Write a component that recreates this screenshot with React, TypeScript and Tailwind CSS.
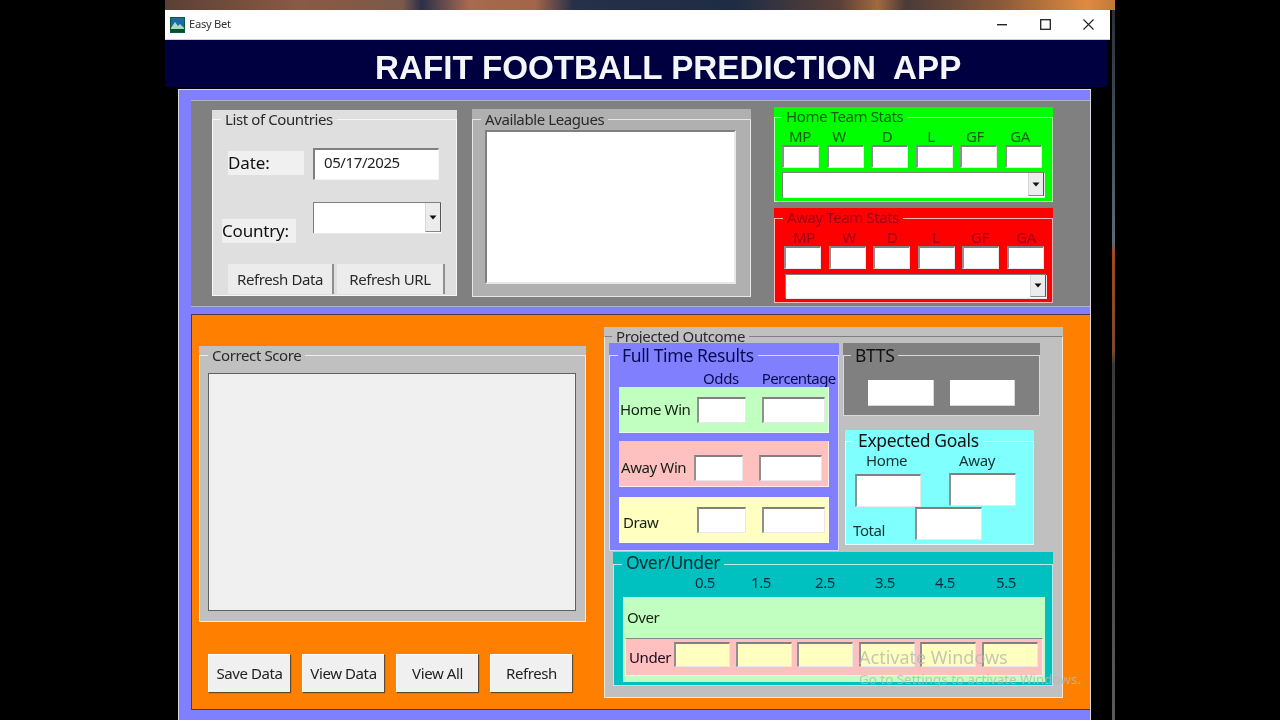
import React from "react";

const font = { fontFamily: '"Noto Sans", Tahoma, sans-serif' };
const small = "text-[15px] tracking-[-0.4px]";

function Caret() {
  return (
    <svg width="8" height="5" viewBox="0 0 8 5" className="block">
      <path d="M0.5 0.5H7.5L4 4.5Z" fill="#111" />
    </svg>
  );
}

function Combo({ cls, btn }: { cls: string; btn: string }) {
  return (
    <div className={`flex justify-end bg-white border-t border-l border-[#808080] shadow-[1px_1px_0_#e8e8e8] ${cls}`}>
      <div className={`flex items-center justify-center bg-[#ececec] border-l border-[#d8d8d8] border-r border-b border-r-[#555] border-b-[#888] ${btn}`}>
        <Caret />
      </div>
    </div>
  );
}

function Field({ cls }: { cls: string }) {
  return <div className={`border-t-2 border-l-2 border-t-[#808080] border-l-[#909090] border-r border-b border-r-[#e8e8e8] border-b-[#e8e8e8] ${cls}`} />;
}

function Group({
  title,
  cls,
  bg,
  titleCls,
  lineTop,
  left,
  frame = "border-white/70",
  children,
}: {
  title: string;
  cls: string;
  bg: string;
  titleCls: string;
  lineTop: string;
  left: string;
  frame?: string;
  children?: React.ReactNode;
}) {
  return (
    <div className={`relative shrink-0 ${bg} ${cls}`}>
      <div className={`absolute inset-x-0 bottom-0 border ${frame} ${lineTop}`} />
      <div className={`relative w-fit whitespace-nowrap px-[4px] ${bg} ${left} ${titleCls}`}>{title}</div>
      {children}
    </div>
  );
}

function FormButton({ label }: { label: string }) {
  return (
    <div className={`flex h-[38px] w-[82px] items-center justify-center bg-[#f0f0f0] border-t border-l border-t-white border-l-white shadow-[1px_1px_1px_#5c4a30] text-[#222] ${small}`}>
      {label}
    </div>
  );
}

function Stats({ cols, gaps }: { cols: [string, string][]; gaps: string }) {
  return (
    <>
      <div className="flex">
        {cols.map(([t, c]) => (
          <div key={t} className={`text-center ${c}`}>
            {t}
          </div>
        ))}
      </div>
      <div className={`flex ${gaps}`}>
        {cols.map(([t]) => (
          <Field key={t} cls="h-[23px] w-[37px] bg-white" />
        ))}
      </div>
    </>
  );
}

function OddsRow({
  label,
  bg,
  mt,
  pl,
  pt,
  labelCls,
}: {
  label: string;
  bg: string;
  mt: string;
  pl: string;
  pt: string;
  labelCls: string;
}) {
  return (
    <div className={`relative z-10 ml-[10px] flex h-[46px] w-[210px] items-center border-b border-r border-white/70 ${bg} ${mt} ${pl} ${pt}`}>
      <div className={`whitespace-nowrap text-[#152015] ${small} ${labelCls}`}>{label}</div>
      <Field cls="h-[26px] w-[49px] bg-white" />
      <Field cls="ml-[16px] h-[26px] w-[63px] bg-white" />
    </div>
  );
}

export default function App() {
  return (
    <div className="h-[720px] w-[1280px] overflow-hidden bg-black blur-[0.4px]" style={font}>
      <div className="relative ml-[165px] flex h-[720px] w-[950px] flex-col">
        <div className="h-[10px] w-full shrink-0 bg-[linear-gradient(90deg,#5a4034_0%,#8a5a44_14%,#7a5a4a_25%,#2a3048_27%,#a86a50_32%,#a0654a_39%,#263048_43%,#1e2c44_60%,#5a4038_71%,#a06a40_75%,#4a3a38_78%,#8a5a3a_88%,#e08a40_97%,#c07a3a_100%)]" />
        <div className="flex min-h-0 flex-1">
          <div className="flex w-[947px] shrink-0 flex-col">
            <div className="flex h-[30px] w-[945px] shrink-0 items-center bg-white border-b border-[#d0d0d0] pl-[5px] pr-[16px] text-[11.2px] tracking-[-0.3px] text-[#333]">
              <svg width="15" height="16" viewBox="0 0 15 16" className="mr-[4px]">
                <rect width="15" height="16" fill="#0b5a3c" />
                <rect x="1" y="1" width="13" height="10" fill="#1c68a8" />
                <path d="M1 11L5 5L8 9L10 7L14 11V13H1Z" fill="#a8dcc0" />
                <rect x="1" y="12" width="13" height="3" fill="#0b4d2e" />
              </svg>
              <span>Easy Bet</span>
              <div className="ml-auto flex items-center">
                <svg width="10" height="2" viewBox="0 0 10 2">
                  <rect width="10" height="1.4" fill="#222" />
                </svg>
                <svg width="11" height="11" viewBox="0 0 11 11" className="ml-[33px]">
                  <rect x="0.7" y="0.7" width="9.6" height="9.6" fill="none" stroke="#222" strokeWidth="1.3" />
                </svg>
                <svg width="11" height="11" viewBox="0 0 11 11" className="ml-[32px]">
                  <path d="M0.5 0.5L10.5 10.5M10.5 0.5L0.5 10.5" stroke="#222" strokeWidth="1.1" />
                </svg>
              </div>
            </div>
            <div
              className="h-[47px] w-[942px] shrink-0 whitespace-pre bg-[#000040] pl-[210px] pt-[7px] text-[33.2px] font-bold leading-[42px] text-[#f4f6fa]"
              style={{ fontFamily: '"Liberation Sans", Arial, sans-serif' }}
            >
              RAFIT FOOTBALL PREDICTION  APP
            </div>

            <div className="ml-[13px] mt-[2px] h-[631px] w-[913px] shrink-0 border-t border-l border-r border-[#d8d8e8] bg-[#8080ff] pl-[12px] pt-[10px]">
              {/* top panel */}
              <div className="flex h-[207px] w-[899px] border-t border-b border-[#b0b0d0] bg-[#808080]">
                <Group
                  title="List of Countries"
                  cls="ml-[21px] mt-[9px] h-[186px] w-[245px]"
                  bg="bg-[#dfdfdf]"
                  titleCls={`${small} h-[20px] leading-[18px] text-[#2a2a2a]`}
                  lineTop="top-[9px]"
                  left="ml-[9px]"
                >
                  <div className="relative flex pl-[16px] pt-[18px]">
                    <div className="mt-[3px] flex h-[24px] w-[76px] items-center bg-[#f0f0f0] text-[17px] tracking-[-0.1px] text-[#111]">Date:</div>
                    <div className={`ml-[9px] flex h-[32px] w-[126px] items-start border-t-2 border-l-2 border-[#808080] border-r border-b border-r-[#f4f4f4] border-b-[#f4f4f4] bg-white pl-[9px] leading-[24px] text-[#222] ${small}`}>
                      05/17/2025
                    </div>
                  </div>
                  <div className="relative flex pl-[10px] pt-[22px]">
                    <div className="mt-[17px] flex h-[24px] w-[74px] items-center bg-[#f0f0f0] text-[17px] tracking-[-0.2px] text-[#111]">Country:</div>
                    <Combo cls="ml-[17px] h-[31px] w-[128px]" btn="w-[16px] h-[29px]" />
                  </div>
                  <div className={`relative ml-[16px] mt-[21px] flex gap-[3px] text-[#2a2a2a] ${small}`}>
                    <div className="flex h-[30px] w-[106px] items-center justify-center border-r-2 border-r-[#909090] bg-[#ececec]">Refresh Data</div>
                    <div className="flex h-[30px] w-[108px] items-center justify-center border-r-2 border-r-[#909090] bg-[#ececec]">Refresh URL</div>
                  </div>
                </Group>

                <Group
                  title="Available Leagues"
                  cls="ml-[15px] mt-[8px] h-[188px] w-[279px]"
                  bg="bg-[#b0b0b0]"
                  titleCls={`${small} leading-[20px] text-[#2a2a2a]`}
                  lineTop="top-[10px]"
                  left="ml-[9px]"
                >
                  <div className="relative ml-[13px] mt-[1px] h-[154px] w-[251px] border-t-2 border-l-2 border-[#808080] border-r-2 border-b-2 border-r-[#e8e8e8] border-b-[#e8e8e8] bg-white" />
                </Group>

                <div className="ml-[23px] mt-[6px] flex w-[279px] flex-col gap-[6px]">
                  <Group
                    title="Home Team Stats"
                    cls="h-[95px] w-[279px]"
                    bg="bg-[#00ff00]"
                    titleCls={`${small} h-[20px] leading-[18px] text-[#0a600a]`}
                    lineTop="top-[10px]"
                    left="ml-[8px]"
                  >
                    <div className={`relative leading-[18px] text-[#0a600a] ${small}`}>
                      <Stats
                        cols={[
                          ["MP", "w-[36px] ml-[8px]"],
                          ["W", "w-[16px] ml-[13px]"],
                          ["D", "w-[16px] ml-[32px]"],
                          ["L", "w-[16px] ml-[28px]"],
                          ["GF", "w-[20px] ml-[26px]"],
                          ["GA", "w-[24px] ml-[23px]"],
                        ]}
                        gaps="gap-[7.6px] pl-[8px]"
                      />
                      <Combo cls="ml-[8px] mt-[4px] h-[25px] w-[262px]" btn="w-[16px] h-[23px]" />
                    </div>
                  </Group>
                  <Group
                    title="Away Team Stats"
                    cls="h-[95px] w-[279px]"
                    bg="bg-[#ff0000]"
                    titleCls={`${small} h-[20px] leading-[18px] text-[#a00018]`}
                    lineTop="top-[10px]"
                    left="ml-[9px]"
                  >
                    <div className={`relative leading-[18px] text-[#a00018] ${small}`}>
                      <Stats
                        cols={[
                          ["MP", "w-[36px] ml-[12px]"],
                          ["W", "w-[16px] ml-[19px]"],
                          ["D", "w-[16px] ml-[27px]"],
                          ["L", "w-[16px] ml-[28px]"],
                          ["GF", "w-[20px] ml-[26px]"],
                          ["GA", "w-[24px] ml-[24px]"],
                        ]}
                        gaps="gap-[7.6px] pl-[10px]"
                      />
                      <Combo cls="ml-[11px] mt-[5px] h-[24px] w-[261px]" btn="w-[16px] h-[22px]" />
                    </div>
                  </Group>
                </div>
              </div>

              {/* bottom panel */}
              <div className="mt-[7px] flex h-[396px] w-[899px] border-t border-l border-b border-[#503a40] bg-[#ff8000]">
                <div className="ml-[7px] w-[387px] shrink-0">
                  <Group
                    title="Correct Score"
                    cls="mt-[31px] h-[276px] w-[387px]"
                    bg="bg-[#c0c0c0]"
                    titleCls={`${small} h-[20px] leading-[18px] text-[#2a2a2a]`}
                    lineTop="top-[9px]"
                    left="ml-[9px]"
                  >
                    <div className="relative ml-[9px] mt-[7px] h-[238px] w-[368px] border border-[#606060] bg-[#f0f0f0]" />
                  </Group>
                  <div className="ml-[9px] mt-[32px] flex gap-[12px]">
                    <FormButton label="Save Data" />
                    <FormButton label="View Data" />
                    <FormButton label="View All" />
                    <FormButton label="Refresh" />
                  </div>
                </div>

                <Group
                  title="Projected Outcome"
                  cls="ml-[18px] mt-[12px] h-[371px] w-[459px]"
                  bg="bg-[#c0c0c0]"
                  titleCls={`${small} h-[16px] leading-[18px] text-[#2a2a2a]`}
                  lineTop="top-[9px]"
                  left="ml-[8px]"
                  frame="border-[#f0e8d8] border-t-[#808080]"
                >
                  <div className="relative flex">
                    <Group
                      title="Full Time Results"
                      cls="ml-[5px] h-[208px] w-[230px]"
                      bg="bg-[#8080ff]"
                      titleCls="text-[17.5px] tracking-[-0.35px] leading-[25px] text-[#0a0a50]"
                      lineTop="top-[12px]"
                      left="ml-[9px]"
                    >
                      <div className={`relative flex leading-[20px] text-[#0a0a50] ${small}`}>
                        <span className="ml-[94px]">Odds</span>
                        <span className="ml-[23px] tracking-[-0.6px]">Percentage</span>
                      </div>
                      <OddsRow label="Home Win" bg="bg-[#c0ffc0]" mt="-mt-[1px]" pl="pl-[1px]" pt="" labelCls="w-[77px]" />
                      <OddsRow label="Away Win" bg="bg-[#ffc0c0]" mt="mt-[8px]" pl="pl-[2px]" pt="pt-[8px]" labelCls="w-[73px]" />
                      <OddsRow label="Draw" bg="bg-[#ffffc0]" mt="mt-[10px]" pl="pl-[4px]" pt="" labelCls="w-[74px] pt-[6px]" />
                    </Group>
                    <div className="ml-[4px] flex flex-col">
                      <Group
                        title="BTTS"
                        cls="h-[73px] w-[197px]"
                        bg="bg-[#808080]"
                        titleCls="text-[17.5px] tracking-[-0.35px] leading-[25px] text-[#111]"
                        lineTop="top-[12px]"
                        left="ml-[8px]"
                      >
                        <div className="relative ml-[25px] mt-[12px] flex gap-[16px]">
                          <div className="h-[26px] w-[66px] border-r border-b border-[#d8d8d8] bg-white" />
                          <div className="h-[26px] w-[65px] border-r border-b border-[#d8d8d8] bg-white" />
                        </div>
                      </Group>
                      <Group
                        title="Expected Goals"
                        cls="ml-[2px] mt-[14px] h-[115px] w-[189px]"
                        bg="bg-[#80ffff]"
                        titleCls="text-[17.5px] tracking-[-0.35px] leading-[21px] text-[#111]"
                        lineTop="top-[11px]"
                        left="ml-[9px]"
                      >
                        <div className={`relative flex leading-[18px] text-[#153030] ${small}`}>
                          <span className="ml-[21px]">Home</span>
                          <span className="ml-[52px]">Away</span>
                        </div>
                        <div className="relative flex items-start pl-[10px] pt-[4px]">
                          <Field cls="mt-[1px] h-[33px] w-[66px] bg-white" />
                          <Field cls="ml-[28px] h-[33px] w-[67px] bg-white" />
                        </div>
                        <div className="relative flex pl-[8px]">
                          <span className={`mt-[11px] leading-[24px] text-[#153030] ${small}`}>Total</span>
                          <Field cls="ml-[30px] h-[33px] w-[67px] bg-white" />
                        </div>
                      </Group>
                    </div>
                  </div>
                  <Group
                    title="Over/Under"
                    cls="ml-[9px] mt-[1px] h-[134px] w-[440px]"
                    bg="bg-[#00c0c0]"
                    titleCls="text-[17.5px] tracking-[-0.35px] leading-[20px] text-[#042a30]"
                    lineTop="top-[12px]"
                    left="ml-[9px]"
                  >
                    <div className={`relative flex leading-[20px] text-[#0a2a40] ${small}`}>
                      <span className="ml-[82px] w-[22px]">0.5</span>
                      <span className="ml-[34px] w-[22px]">1.5</span>
                      <span className="ml-[42px] w-[22px]">2.5</span>
                      <span className="ml-[38px] w-[22px]">3.5</span>
                      <span className="ml-[38px] w-[22px]">4.5</span>
                      <span className="ml-[39px] w-[22px]">5.5</span>
                    </div>
                    <div className="relative ml-[10px] mt-[5px] h-[85px] w-[422px] bg-[#c0ffc0] pt-[41px]">
                      <span className={`absolute left-[4px] top-[10px] leading-[20px] text-[#152015] ${small}`}>Over</span>
                      <div className={`ml-[2px] flex h-[38px] w-[418px] items-center border border-white/70 border-t-[#888] bg-[#ffc0c0] pl-[3px] text-[#1a0a20] ${small}`}>
                        <span className="w-[45px]">Under</span>
                        <div className="mb-[5px] flex gap-[5.5px]">
                          {[0, 1, 2, 3, 4, 5].map((i) => (
                            <Field key={i} cls="h-[25px] w-[56px] bg-[#ffffc0]" />
                          ))}
                        </div>
                      </div>
                    </div>
                  </Group>
                </Group>
              </div>
            </div>
          </div>
          <div className="w-[3px] bg-[linear-gradient(180deg,#2a3038_0%,#5a6a78_33%,#a04a20_34%,#7a4a2a_48%,#3a3838_50%,#5a5a5a_100%)]" />
        </div>

        <div className="pointer-events-none absolute left-[694px] top-[645px] text-[#b8b8b0]/80">
          <div className="text-[18px] leading-[24px]">Activate Windows</div>
          <div className="mt-[1px] whitespace-nowrap text-[13.4px] leading-[18px]">Go to Settings to activate Windows.</div>
        </div>
      </div>
    </div>
  );
}
